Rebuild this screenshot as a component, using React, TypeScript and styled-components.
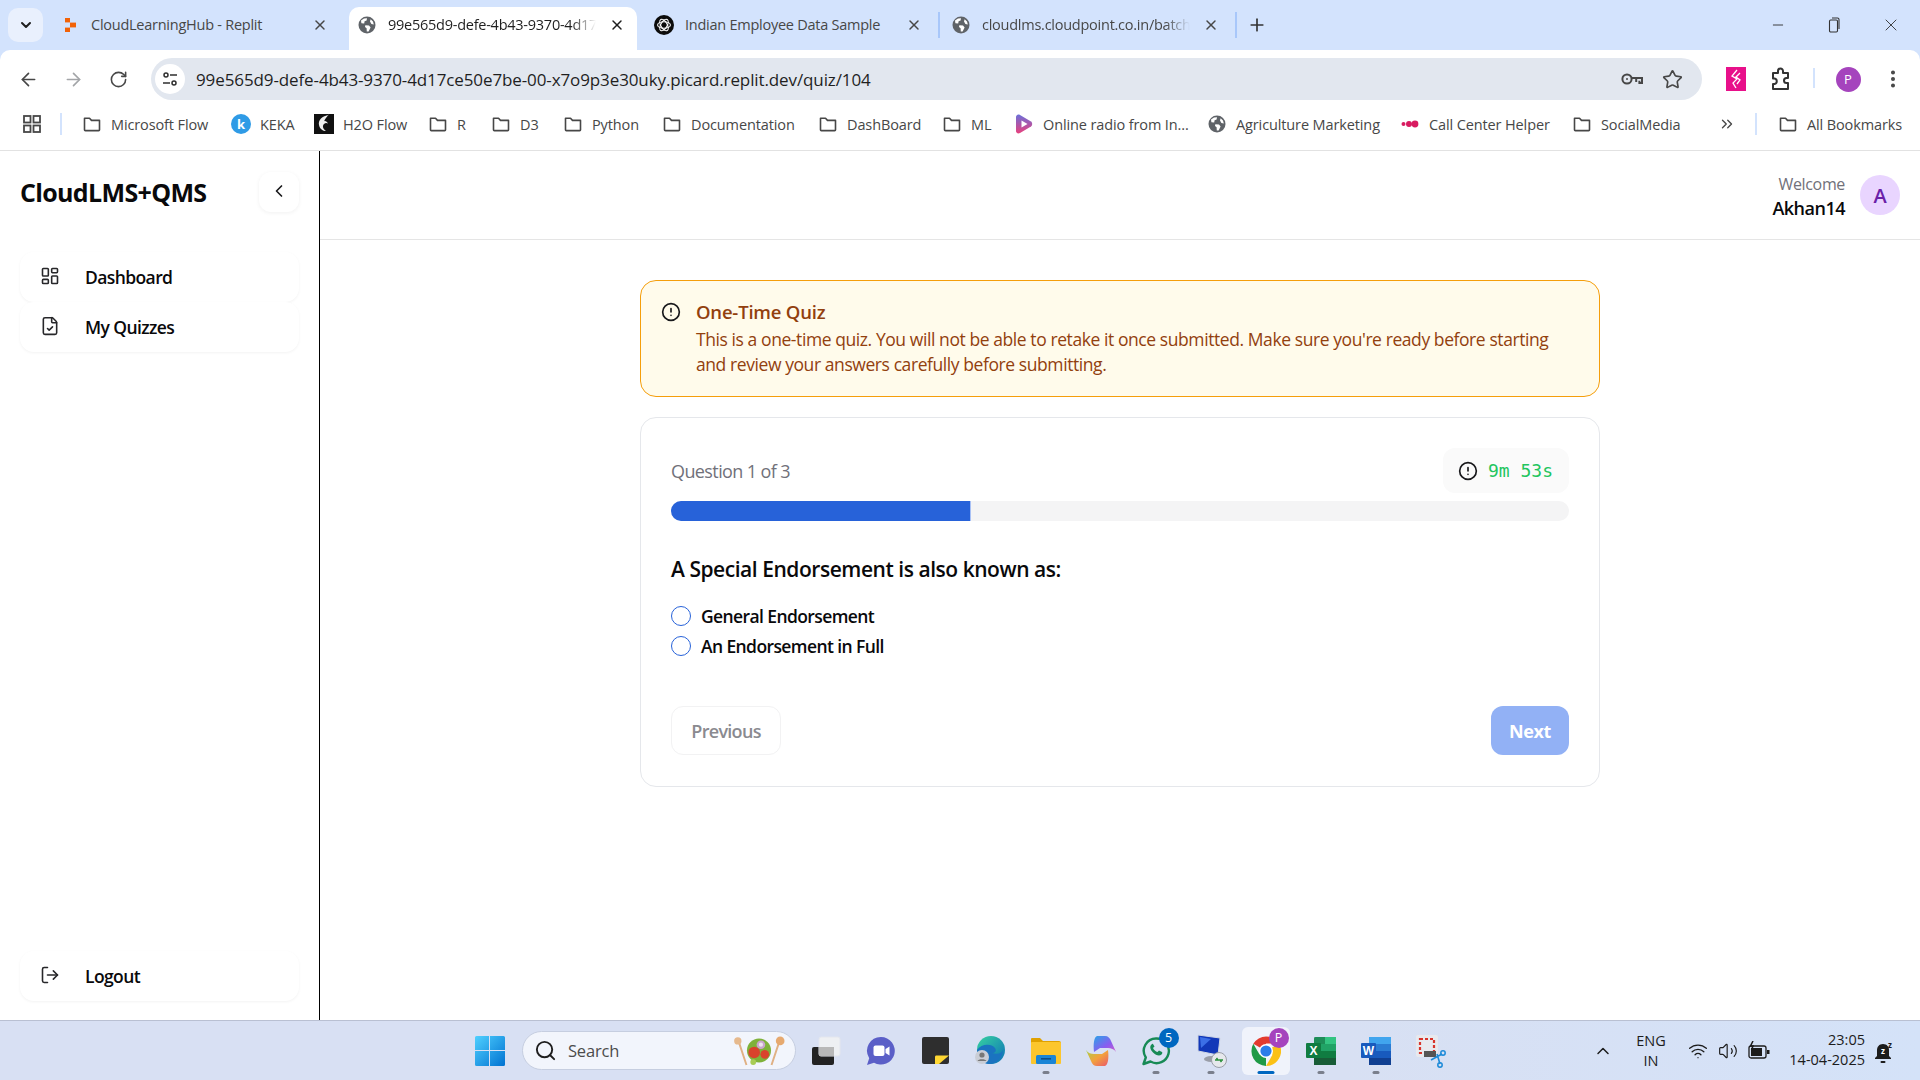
import React from 'react';
import styled, { createGlobalStyle } from 'styled-components';
import {
  ArrowLeft, ArrowRight, RotateCw, Star, EllipsisVertical, X, Plus, Minus, ChevronDown, ChevronUp, ChevronLeft,
  ChevronsRight, LayoutDashboard, FileCheck, LogOut, CircleAlert, Search as SearchGlyph, Wifi, Volume2,
} from 'lucide-react';

const UI = `'Open Sans', 'Noto Sans', 'Liberation Sans', sans-serif`;

const Global = createGlobalStyle`
  html, body { margin: 0; padding: 0; background: #fff; }
  body { font-family: ${UI}; overflow: hidden; }
  * { box-sizing: border-box; }
`;

const Page = styled.div`
  width: 1920px; height: 1080px; display: flex; flex-direction: column; overflow: hidden;
  background: #d3e3fd;
`;

/* ---------- tab strip ---------- */
const TabStrip = styled.div`
  height: 50px; flex: none; display: flex; align-items: flex-end; padding-left: 8px; background: #d3e3fd;
`;
const TabMenu = styled.div`
  width: 35px; height: 34px; margin: 0 9px 8px 0; border-radius: 10px; background: #e9f0fd;
  display: flex; align-items: center; justify-content: center; color: #1f1f1f;
`;
const Tab = styled.div<{ $active?: boolean }>`
  width: 288px; height: ${p => (p.$active ? 43 : 34)}px; margin-bottom: ${p => (p.$active ? 0 : 8)}px;
  display: flex; align-items: center; padding: 0 0 ${p => (p.$active ? 8 : 1)}px 10px;
  background: ${p => (p.$active ? '#fff' : 'transparent')};
  border-radius: 10px 10px 0 0;
  color: ${p => (p.$active ? '#1f1f1f' : '#474747')};
`;
const TabIcon = styled.span`
  width: 16px; height: 20px; flex: none; display: flex; align-items: center; justify-content: center;
  svg { flex: none; }
`;
const TabTitle = styled.span<{ $fade?: boolean }>`
  margin-left: 13px; width: 208px; font-size: 14.5px; letter-spacing: -0.25px; white-space: nowrap; overflow: hidden;
  ${p => p.$fade ? `-webkit-mask-image: linear-gradient(to right, #000 88%, transparent 100%); mask-image: linear-gradient(to right, #000 88%, transparent 100%);` : ''}
`;
const TabClose = styled.span`
  width: 22px; display: flex; justify-content: center; margin-left: 10px;
`;
const TabGap = styled.div`
  width: 9px; height: 26px; margin-bottom: 12px; display: flex; justify-content: center;
`;
const TabLine = styled.div<{ $on?: boolean }>`
  width: 2px; height: 100%; background: ${p => (p.$on ? '#a8c7fa' : 'transparent')};
`;
const NewTab = styled.div`
  width: 24px; height: 24px; margin: 0 0 13px 5px; display: flex; align-items: center; justify-content: center; color: #333;
`;
const WindowButtons = styled.div`
  margin-left: auto; height: 50px; display: flex; align-items: center; color: #333;
`;
const WinBtn = styled.div<{ $w: number }>`
  width: ${p => p.$w}px; display: flex; justify-content: center;
`;

/* ---------- toolbar ---------- */
const Toolbar = styled.div`
  height: 51px; flex: none; background: #fff; border-radius: 10px 10px 0 0; display: flex; align-items: flex-end;
  padding: 0 0 1px 6px;
`;
const NavCell = styled.div<{ $muted?: boolean }>`
  width: 45px; height: 42px; display: flex; align-items: center; justify-content: center;
  color: ${p => (p.$muted ? '#a3a5a8' : '#474747')};
`;
const AddressBar = styled.div`
  width: 1551px; height: 42px; margin-left: 10px; border-radius: 21px; background: #e2e7ef;
  display: flex; align-items: center; padding: 0 4px 0 4px;
`;
const SiteInfo = styled.div`
  width: 30px; height: 30px; border-radius: 50%; background: #fff; flex: none;
  display: flex; align-items: center; justify-content: center;
`;
const UrlText = styled.span`
  margin-left: 11px; font-size: 17px; letter-spacing: -0.11px; color: #1f1f1f; white-space: nowrap;
`;
const AddressIcons = styled.div`
  margin-left: auto; display: flex; align-items: center; gap: 18px; padding-right: 15px; color: #474747;
`;
const ToolCell = styled.div<{ $w: number; $ml?: number }>`
  width: ${p => p.$w}px; margin-left: ${p => p.$ml ?? 0}px; height: 42px;
  display: flex; align-items: center; justify-content: center; color: #474747;
`;
const ToolSep = styled.div`
  width: 2px; height: 20px; margin: 0 10px 12px 10px; background: #d3e3fd;
`;
const ProfileDot = styled.div`
  width: 25px; height: 25px; border-radius: 50%; background: #a544bd; color: #fff; font-size: 13px;
  display: flex; align-items: center; justify-content: center;
`;

/* ---------- bookmarks ---------- */
const BookmarkBar = styled.div`
  height: 50px; flex: none; background: #fff; border-bottom: 1px solid #e2e2e2; display: flex; align-items: center;
  padding: 0 18px 3px 20px;
`;
const AppsCell = styled.div`
  width: 24px; display: flex; justify-content: center; color: #474747;
`;
const BarSep = styled.div<{ $ml: number; $mr: number }>`
  width: 2px; height: 22px; background: #d3e3fd; margin: 0 ${p => p.$mr}px 0 ${p => p.$ml}px;
`;
const Bookmark = styled.div<{ $w?: number }>`
  ${p => (p.$w ? `width: ${p.$w}px;` : '')} display: flex; align-items: center; gap: 10px; flex: none;
  font-size: 14.5px; letter-spacing: -0.12px; color: #474747; white-space: nowrap;
`;
const BookmarkIcon = styled.span`
  width: 18px; height: 20px; flex: none; display: flex; align-items: center; justify-content: center;
  svg { flex: none; }
`;
const BookmarkEnd = styled.div`
  margin-left: auto; display: flex; align-items: center; color: #474747;
`;

/* ---------- body ---------- */
const Body = styled.div`
  flex: 1; min-height: 0; display: flex; background: #fff;
`;
const Sidebar = styled.aside`
  width: 320px; flex: none; border-right: 1px solid #000; display: flex; flex-direction: column;
  padding: 21px 20px 19px 20px;
`;
const SideTop = styled.div`
  display: flex; align-items: center; justify-content: space-between; height: 40px; margin-bottom: 40px;
`;
const Logo = styled.div`
  font-size: 25px; font-weight: 700; letter-spacing: -0.65px; color: #09090b; white-space: nowrap;
`;
const CollapseBtn = styled.div`
  width: 40px; height: 40px; border-radius: 12px; background: #fff; color: #18181b; padding-bottom: 2px;
  box-shadow: 0 1px 4px rgba(0,0,0,.06); display: flex; align-items: center; justify-content: center;
`;
const NavItem = styled.div`
  width: 279px; height: 50px; border-radius: 14px; background: #fff; box-shadow: 0 1px 3px rgba(0,0,0,.05);
  display: flex; align-items: center; padding-left: 20px; font-size: 17.5px; font-weight: 600; letter-spacing: -0.6px;
  color: #09090b; gap: 25px;
  svg { color: #27272a; flex: none; margin-top: -2px; }
`;
const NavSpacer = styled.div` flex: 1; `;
const Main = styled.main` flex: 1; min-width: 0; display: flex; flex-direction: column; `;
const Header = styled.header`
  height: 89px; flex: none; border-bottom: 1px solid #e5e5e5; display: flex; align-items: center; justify-content: flex-end;
  padding: 0 20px 0 0; gap: 15px;
`;
const UserText = styled.div` text-align: right; padding-top: 2px; `;
const Welcome = styled.div` font-size: 16px; line-height: 24px; color: #71717a; letter-spacing: -0.35px; `;
const UserName = styled.div` font-size: 18px; line-height: 24px; font-weight: 600; color: #09090b; letter-spacing: -0.5px; `;
const Avatar = styled.div`
  width: 40px; height: 40px; border-radius: 50%; background: #e9d5ff; color: #6b21a8; font-size: 20px; font-weight: 600;
  display: flex; align-items: center; justify-content: center;
`;
const Content = styled.div`
  width: 960px; margin: 40px auto 0; display: flex; flex-direction: column; gap: 20px;
`;
const Alert = styled.section`
  height: 117px; border: 1px solid #f59e0b; border-radius: 16px; background: #fffbeb; padding: 18px 24px 0 20px;
  display: flex; gap: 15px;
  svg { flex: none; color: #18181b; margin-top: 3px; }
`;
const AlertTitle = styled.div`
  font-size: 18.5px; line-height: 25px; font-weight: 600; color: #92400e; letter-spacing: -0.2px;
`;
const AlertText = styled.div`
  font-size: 17.5px; line-height: 25px; color: #92400e; letter-spacing: -0.42px; margin-top: 3px;
`;
const Card = styled.section`
  height: 370px; border: 1px solid #e5e7eb; border-radius: 16px; background: #fff; padding: 30px;
  display: flex; flex-direction: column;
`;
const CardTop = styled.div` display: flex; align-items: center; justify-content: space-between; `;
const QuestionCount = styled.div` font-size: 18px; color: #71717a; letter-spacing: -0.6px; `;
const Timer = styled.div`
  height: 45px; width: 126px; border-radius: 12px; background: #fafafa; display: flex; align-items: center; gap: 10px;
  padding-left: 15px; svg { color: #18181b; flex: none; }
`;
const TimerText = styled.span`
  font-family: 'DejaVu Sans Mono', 'Liberation Mono', monospace; font-size: 18px; color: #22c55e; white-space: nowrap;
`;
const Track = styled.div`
  height: 20px; margin-top: 8px; border-radius: 10px; background: #f4f4f5; overflow: hidden;
`;
const Fill = styled.div`
  height: 100%; background: #2762d9; border-right: 1px solid #a9c1f5;
`;
const QuestionTitle = styled.h2`
  margin: 32px 0 0; font-size: 21px; line-height: 32px; font-weight: 600; color: #09090b; letter-spacing: -0.46px;
`;
const Options = styled.div` margin-top: 16px; display: flex; flex-direction: column; `;
const Option = styled.label`
  height: 30px; display: flex; align-items: center; gap: 10px; font-size: 17.5px; font-weight: 600; color: #09090b; letter-spacing: -0.6px;
`;
const Radio = styled.input`
  appearance: none; margin: 0; width: 20px; height: 20px; border-radius: 50%; border: 1.5px solid #2762d9; background: #fff; flex: none;
`;
const Actions = styled.div` margin: auto 0 1px; display: flex; justify-content: space-between; `;
const PrevBtn = styled.button`
  width: 110px; height: 49px; border: 1px solid #f2f2f3; border-radius: 12px; background: #fff;
  font-family: ${UI}; font-size: 18px; font-weight: 600; color: #8a8a90; letter-spacing: -0.7px;
`;
const NextBtn = styled.button`
  width: 78px; height: 49px; border: 0; border-radius: 12px; background: #92b1f5;
  font-family: ${UI}; font-size: 18px; font-weight: 700; color: #fff; letter-spacing: -0.4px;
`;

/* ---------- taskbar ---------- */
const Taskbar = styled.footer`
  height: 60px; flex: none; border-top: 1px solid #b9c0d2;
  background: linear-gradient(to right, #d8e0f3 0%, #d8e0f3 70%, #d4e2f8 100%);
  display: flex; align-items: center; padding-left: 465px; position: relative;
`;
const StartCell = styled.div` width: 50px; display: flex; justify-content: center; flex: none; `;
const SearchPill = styled.div`
  width: 274px; height: 39px; margin: 0 2px 0 7px; border-radius: 20px; background: #f2f5fc; border: 1px solid #c6cee0;
  display: flex; align-items: center; padding-left: 11px; color: #1f1f1f; flex: none;
`;
const SearchLabel = styled.span` margin-left: 11px; font-size: 16.5px; color: #4c4c4c; letter-spacing: -0.2px; `;
const SaladBox = styled.div` margin-left: auto; margin-right: 10px; display: flex; `;
const TaskCell = styled.div<{ $active?: boolean }>`
  width: 48px; height: 48px; margin: 0 3.5px; flex: none; border-radius: 6px; position: relative;
  display: flex; align-items: center; justify-content: center;
  background: ${p => (p.$active ? '#f0f3fb' : 'transparent')};
`;
const Pip = styled.span<{ $active?: boolean }>`
  position: absolute; bottom: 1px; left: 50%; transform: translateX(-50%);
  width: ${p => (p.$active ? 17 : 7)}px; height: 3px; border-radius: 2px; background: ${p => (p.$active ? '#0067c0' : '#7a7f8c')};
`;
const Badge = styled.span<{ $bg: string }>`
  position: absolute; top: 1px; right: 1px; width: 20px; height: 20px; border-radius: 50%; background: ${p => p.$bg}; color: #fff;
  font-size: 12.5px; display: flex; align-items: center; justify-content: center;
`;
const Tray = styled.div`
  margin-left: auto; display: flex; align-items: center; color: #1c1c1c;
`;
const TrayChevron = styled.div` width: 40px; display: flex; justify-content: center; `;
const Lang = styled.div` width: 50px; margin-left: 3px; text-align: center; font-size: 14.5px; line-height: 20px; `;
const TrayIcons = styled.div` margin-left: 12px; display: flex; align-items: center; gap: 10px; `;
const Clock = styled.div` width: 90px; margin-left: 5px; padding-bottom: 2px; text-align: right; font-size: 14.5px; line-height: 20px; white-space: nowrap; `;
const BellCell = styled.div` width: 34px; margin-left: 4px; margin-right: 17px; display: flex; justify-content: center; `;

/* ---------- drawn icons ---------- */
const Globe = ({ s = 18 }: { s?: number }) => (
  <svg width={s} height={s} viewBox="0 0 18 18">
    <circle cx="9" cy="9" r="8.5" fill="#5f6368" />
    <path d="M3 4.5 6 2.5 9 2.2 8.6 4.4 6.6 5.2 6.2 7.5 3.4 7.2ZM7.3 9.2 11 9.6 12.6 11.6 10.6 15.6 8.8 15.6 8.6 12.2 7 11ZM12.6 3.2 15 5.6 15.8 8.6 13.4 8 12 5.6Z" fill="#fff" />
  </svg>
);
const Folder = () => (
  <svg width="18" height="18" viewBox="0 0 18 18" fill="none" stroke="#474747" strokeWidth="1.6">
    <path d="M1.5 3.2h5l2 2.2h8v9.4a.8.8 0 0 1-.8.8H2.3a.8.8 0 0 1-.8-.8Z" strokeLinejoin="round" />
  </svg>
);
const ReplitIcon = () => (
  <svg width="16" height="16" viewBox="0 0 16 16" fill="#f26207">
    <rect x="3" y="1" width="5" height="4.4" />
    <rect x="8" y="5.6" width="6" height="4.8" />
    <rect x="3" y="10.6" width="5" height="4.4" />
  </svg>
);
const OpenAiIcon = () => (
  <svg width="20" height="20" viewBox="0 0 20 20">
    <circle cx="10" cy="10" r="10" fill="#0b0b0b" />
    <g fill="none" stroke="#fff" strokeWidth="1.1">
      <ellipse cx="10" cy="10" rx="6.4" ry="3.2" />
      <ellipse cx="10" cy="10" rx="6.4" ry="3.2" transform="rotate(60 10 10)" />
      <ellipse cx="10" cy="10" rx="6.4" ry="3.2" transform="rotate(120 10 10)" />
    </g>
  </svg>
);
const RestoreIcon = () => (
  <svg width="14" height="16" viewBox="0 0 14 16" fill="none" stroke="#333" strokeWidth="1.1">
    <rect x="2.5" y="3" width="8" height="12" rx="1.2" />
    <path d="M5 1h5.5A1.5 1.5 0 0 1 12 2.5V12" />
  </svg>
);
const SiteTune = () => (
  <svg width="18" height="18" viewBox="0 0 18 18" fill="none" stroke="#2f2f2f" strokeWidth="1.5">
    <circle cx="5" cy="5" r="2" />
    <path d="M9 5h7M2 13h7" />
    <circle cx="13" cy="13" r="2" />
  </svg>
);
const KeyIcon = () => (
  <svg width="24" height="20" viewBox="0 0 24 20" fill="none" stroke="#474747" strokeWidth="2">
    <circle cx="7" cy="10" r="4.6" />
    <path d="M11.6 9H22v5h-2.6v-2.2M16.2 9.5V13" />
    <circle cx="7" cy="10" r="1" fill="#474747" stroke="none" />
  </svg>
);
const PinkExt = () => (
  <svg width="20" height="24" viewBox="0 0 20 24">
    <rect width="20" height="24" fill="#e8108a" />
    <path d="M11 3 6 9l5 3-4 4 3 5M14 6l-4 4 4 3-3 4" fill="none" stroke="#fff" strokeWidth="1.3" />
  </svg>
);
const PuzzleIcon = () => (
  <svg width="22" height="24" viewBox="0 0 22 24" fill="none" stroke="#333" strokeWidth="2" strokeLinejoin="round">
    <path d="M3 6h5V4a2.5 2.5 0 0 1 5 0v2h5v5h-1.5a2.4 2.4 0 0 0 0 5H18v6H3v-5h1.5a2.8 2.8 0 0 0 0-5.500H3Z" />
  </svg>
);
const AppsIcon = () => (
  <svg width="20" height="20" viewBox="0 0 20 20" fill="none" stroke="#474747" strokeWidth="1.8">
    <rect x="2" y="2" width="6.500" height="6.500" />
    <rect x="11.500" y="2" width="6.500" height="6.500" />
    <rect x="2" y="11.500" width="6.500" height="6.500" />
    <rect x="11.500" y="11.500" width="6.500" height="6.500" />
  </svg>
);
const KekaIcon = () => (
  <svg width="20" height="20" viewBox="0 0 20 20">
    <circle cx="10" cy="10" r="10" fill="#2f9be6" />
    <text x="10" y="14.500" textAnchor="middle" fontSize="13" fontWeight="700" fontFamily="Open Sans" fill="#fff">k</text>
  </svg>
);
const H2oIcon = () => (
  <svg width="20" height="20" viewBox="0 0 20 20">
    <rect width="20" height="20" fill="#111" />
    <path d="M15 1C8 2 4 6 5 11c.8 4 4 6 7 6-3-2-4-5-2-7 1.500-1.500 3-1 4-.500-1-2-3-3-4-2 1-3 3-5 5-7Z" fill="#eee" />
  </svg>
);
const RadioIcon = () => (
  <svg width="20" height="20" viewBox="0 0 20 20">
    <defs><linearGradient id="rg" x1="0" y1="0" x2="0" y2="1"><stop offset="0" stopColor="#6c6fd8" /><stop offset="1" stopColor="#e8417d" /></linearGradient></defs>
    <path d="M2 3C2 1 4 0 6 1l11 6.500c1.600 1 1.600 4 0 5L6 19c-2 1-4 0-4-2Z" fill="url(#rg)" />
    <path d="M7.500 6.500v7l6-3.500Z" fill="#fff" />
  </svg>
);
const CallIcon = () => (
  <svg width="18" height="18" viewBox="0 0 18 18" fill="#d81b60">
    <circle cx="2.500" cy="9" r="2" /><circle cx="8" cy="9" r="3" /><circle cx="14" cy="9" r="3.400" />
  </svg>
);
const WinLogo = () => (
  <svg width="30" height="30" viewBox="0 0 30 30">
    <defs><linearGradient id="wl" x1="0" y1="0" x2="1" y2="1"><stop offset="0" stopColor="#4fd0ff" /><stop offset="1" stopColor="#0072d1" /></linearGradient></defs>
    <path d="M0 1.500A1.500 1.500 0 0 1 1.500 0H14v14H0ZM15 0h13.500A1.500 1.500 0 0 1 30 1.500V14H15ZM0 15h14v15H1.500A1.500 1.500 0 0 1 0 28.500ZM15 15h15v13.500a1.500 1.500 0 0 1-1.500 1.500H15Z" fill="url(#wl)" />
  </svg>
);
const Salad = () => (
  <svg width="52" height="30" viewBox="0 0 54 31">
    <path d="M6 6 14 30M48 6l-8 24" stroke="#e0b184" strokeWidth="2" />
    <circle cx="5" cy="5" r="3.800" fill="#e6b98d" /><circle cx="49" cy="5" r="4.500" fill="#e6a96f" />
    <circle cx="27" cy="15" r="12.500" fill="#7fb23a" />
    <circle cx="22" cy="17" r="6" fill="#d9432c" /><circle cx="33" cy="19" r="4.500" fill="#d9432c" />
    <circle cx="29" cy="9" r="4.500" fill="#c9a6cc" /><circle cx="29" cy="9" r="2.200" fill="#efe3f0" />
    <circle cx="21" cy="27" r="3" fill="#a8cc55" />
  </svg>
);
const TaskView = () => (
  <svg width="30" height="30" viewBox="0 0 30 30">
    <rect x="1" y="11" width="22" height="18" rx="2" fill="#222" />
    <rect x="8" y="1" width="21" height="19" rx="2" fill="#f2f2f2" fillOpacity=".85" stroke="#e3e6ee" />
    <rect x="8" y="11" width="15" height="9" fill="#b8b8b8" />
  </svg>
);
const MeetIcon = () => (
  <svg width="30" height="30" viewBox="0 0 30 30">
    <path d="M15 1a13.800 13.800 0 1 1-7 25.700L1 29l2.200-6.800A13.800 13.800 0 0 1 15 1Z" fill="#5b5fc7" />
    <rect x="7.500" y="9.500" width="11" height="10.500" rx="2" fill="#fff" />
    <path d="M19.500 13l4-2.500v9l-4-2.500Z" fill="#fff" />
  </svg>
);
const StickyIcon = () => (
  <svg width="27" height="27" viewBox="0 0 27 27">
    <rect width="27" height="27" rx="2" fill="#2e2e2e" />
    <path d="M13 27V20c0-1 .6-1.500 1.500-1.500H27L17 27Z" fill="#ffd733" />
  </svg>
);
const EdgeIcon = () => (
  <svg width="32" height="32" viewBox="0 0 32 32">
    <defs><linearGradient id="eg" x1="0" y1="0" x2="1" y2="1"><stop offset="0" stopColor="#37d3a0" /><stop offset="1" stopColor="#0c6fb8" /></linearGradient></defs>
    <circle cx="16" cy="15" r="14" fill="url(#eg)" />
    <path d="M2 15c4-6 14-7 18-2 2 3 0 5-3 5 6 2 10 0 11-3 0 6-5 14-14 14C8 29 2 23 2 15Z" fill="#1a73c0" />
    <circle cx="7" cy="22" r="7" fill="#c9cdd6" /><circle cx="7" cy="20" r="2.600" fill="#777" /><path d="M2.500 26c.8-2.500 8-2.500 9 0Z" fill="#777" />
  </svg>
);
const FilesIcon = () => (
  <svg width="32" height="28" viewBox="0 0 32 28">
    <path d="M1 2a1 1 0 0 1 1-1h8l3 3h16a2 2 0 0 1 2 2v3H1Z" fill="#e0a100" />
    <rect x="1" y="5" width="30" height="22" rx="1" fill="#fcc62d" />
    <rect x="6" y="18" width="20" height="9" rx="1.500" fill="#1a85d6" />
    <rect x="11" y="21" width="10" height="1.600" fill="#0b4e8a" />
  </svg>
);
const CopilotIcon = () => (
  <svg width="32" height="32" viewBox="0 0 32 32">
    <defs>
      <linearGradient id="c1" x1="0" y1="0" x2="1" y2="1"><stop offset="0" stopColor="#2aa4e8" /><stop offset=".6" stopColor="#8a5cf0" /><stop offset="1" stopColor="#d05ac8" /></linearGradient>
      <linearGradient id="c2" x1="0" y1="0" x2="1" y2="1"><stop offset="0" stopColor="#a7d247" /><stop offset=".5" stopColor="#f2a23c" /><stop offset="1" stopColor="#ea5a6a" /></linearGradient>
    </defs>
    <path d="M12 1h8c3 0 5 2 6 5l5 11c-2-3-5-4-8-4h-8L9 17C8 9 9 2 12 1Z" fill="url(#c1)" />
    <path d="M20 31h-8c-3 0-5-2-6-5L1 15c2 3 5 4 8 4h8l6-4c1 8 0 15-3 16Z" fill="url(#c2)" />
  </svg>
);
const WhatsAppIcon = () => (
  <svg width="30" height="30" viewBox="0 0 30 30">
    <path d="M15.500 2.500a12.300 12.300 0 1 1-6 23L2.500 28l2.300-6.500a12.300 12.300 0 0 1 10.700-19Z" fill="none" stroke="#178a55" strokeWidth="2.400" strokeLinejoin="round" />
    <path d="M10.500 8.500c-2 1.500-1.500 5 1.500 8s6.500 4 8.500 2c1-1 1-2 .5-2.500l-3-1.500-1.500 1.500c-2-.5-3.500-2-4.500-4l1.500-1.500L12 8c-.4-.4-1-.2-1.500.5Z" fill="#178a55" />
  </svg>
);
const RdpIcon = () => (
  <svg width="32" height="34" viewBox="0 0 32 34">
    <path d="M3 1l22 3-2 17L3 17Z" fill="#1238b8" stroke="#cfd6e4" />
    <path d="M5 3 16 5 6 14Z" fill="#3c6fe6" />
    <ellipse cx="16" cy="25" rx="7" ry="3" fill="#9a9ea8" />
    <circle cx="24" cy="26" r="7.500" fill="#e6e8ec" stroke="#9a9ea8" />
    <path d="M20 26h3l-1.500-2M28 26h-3l1.500 2" fill="none" stroke="#2a8f3a" strokeWidth="1.500" />
  </svg>
);
const ChromeIcon = () => (
  <svg width="30" height="30" viewBox="0 0 30 30">
    <path d="M15 15 2.300 7.800A15 15 0 0 1 28 7.500H15Z" fill="#e33b2e" />
    <path d="M15 15 28 7.500A15 15 0 0 1 15 30l6.500-11.200Z" fill="#fbc116" />
    <path d="M15 15 15 30A15 15 0 0 1 2.300 7.800l6.200 10.800Z" fill="#1f9a46" />
    <circle cx="15" cy="15" r="7" fill="#fff" /><circle cx="15" cy="15" r="5.600" fill="#2b7de9" />
  </svg>
);
const ExcelIcon = () => (
  <svg width="30" height="28" viewBox="0 0 30 28">
    <rect x="8" y="0" width="22" height="28" rx="1.500" fill="#21a366" />
    <rect x="8" y="0" width="11" height="7" fill="#185c37" fillOpacity=".3" /><rect x="19" y="0" width="11" height="7" fill="#33c481" />
    <rect x="8" y="14" width="22" height="7" fill="#107c41" /><rect x="8" y="21" width="22" height="7" fill="#185c37" />
    <rect x="0" y="6" width="15" height="15" rx="1" fill="#107c41" />
    <text x="7.500" y="18" textAnchor="middle" fontSize="12" fontWeight="700" fontFamily="Liberation Sans" fill="#fff">X</text>
  </svg>
);
const WordIcon = () => (
  <svg width="30" height="28" viewBox="0 0 30 28">
    <rect x="8" y="0" width="22" height="7" fill="#41a5ee" /><rect x="8" y="7" width="22" height="7" fill="#2b7cd3" />
    <rect x="8" y="14" width="22" height="7" fill="#185abd" /><rect x="8" y="21" width="22" height="7" fill="#103f91" />
    <rect x="0" y="6" width="15" height="15" rx="1" fill="#185abd" />
    <text x="7.500" y="18" textAnchor="middle" fontSize="12" fontWeight="700" fontFamily="Liberation Sans" fill="#fff">W</text>
  </svg>
);
const SnipIcon = () => (
  <svg width="32" height="34" viewBox="0 0 32 34">
    <rect x="1" y="1" width="22" height="22" rx="2" fill="#e8e9ee" />
    <rect x="5" y="5" width="14" height="14" fill="none" stroke="#d8342b" strokeWidth="2.200" strokeDasharray="3 2" />
    <rect x="9" y="17" width="12" height="6" fill="#555" />
    <path d="M16 26 27 20M22 20l3 10" stroke="#1c8ad8" strokeWidth="1.600" />
    <circle cx="28" cy="19" r="2.200" fill="none" stroke="#1c8ad8" strokeWidth="1.500" /><circle cx="25" cy="31" r="2.200" fill="none" stroke="#1c8ad8" strokeWidth="1.500" />
  </svg>
);
const BatteryIcon = () => (
  <svg width="22" height="20" viewBox="0 0 22 20" fill="none" stroke="#1c1c1c" strokeWidth="1.300">
    <rect x="1" y="5" width="17" height="12" rx="2" />
    <rect x="3" y="7" width="11" height="8" fill="#1c1c1c" stroke="none" />
    <rect x="19" y="9" width="2.500" height="4" fill="#1c1c1c" stroke="none" />
    <path d="M5 0 2.500 5H5L3.500 9" strokeWidth="1.500" />
  </svg>
);
const BellIcon = () => (
  <svg width="24" height="32" viewBox="0 -6 24 32">
    <path d="M9 3c-4 0-6 3-6 6v6l-2 2v1h16v-1l-2-2V9c0-3-2-6-6-6Z" fill="#1c1c1c" />
    <rect x="6.500" y="20" width="5" height="2" rx="1" fill="#1c1c1c" />
    <text x="9" y="13" textAnchor="middle" fontSize="8" fontWeight="700" fontFamily="Open Sans" fill="#fff">z</text>
    <text x="16" y="7" textAnchor="middle" fontSize="8" fontWeight="700" fontFamily="Open Sans" fill="#1c1c1c">z</text>
  </svg>
);

const bookmarks: { label: string; w: number; icon: React.ReactNode }[] = [
  { label: 'Microsoft Flow', w: 149, icon: <Folder /> },
  { label: 'KEKA', w: 83, icon: <KekaIcon /> },
  { label: 'H2O Flow', w: 114, icon: <H2oIcon /> },
  { label: 'R', w: 63, icon: <Folder /> },
  { label: 'D3', w: 72, icon: <Folder /> },
  { label: 'Python', w: 99, icon: <Folder /> },
  { label: 'Documentation', w: 156, icon: <Folder /> },
  { label: 'DashBoard', w: 124, icon: <Folder /> },
  { label: 'ML', w: 72, icon: <Folder /> },
  { label: 'Online radio from In...', w: 193, icon: <RadioIcon /> },
  { label: 'Agriculture Marketing', w: 193, icon: <Globe s={18} /> },
  { label: 'Call Center Helper', w: 172, icon: <CallIcon /> },
  { label: 'SocialMedia', w: 120, icon: <Folder /> },
];

const tabs = [
  { title: 'CloudLearningHub - Replit', icon: <ReplitIcon />, line: false },
  { title: '99e565d9-defe-4b43-9370-4d17ce50e7be', icon: <Globe />, active: true, fade: true, line: false },
  { title: 'Indian Employee Data Sample', icon: <OpenAiIcon />, line: true },
  { title: 'cloudlms.cloudpoint.co.in/batch/12', icon: <Globe />, fade: true, line: true },
];

const progress = (1 / 3) * 100;

export default function App() {
  return (
    <Page>
      <Global />
      <TabStrip>
        <TabMenu><ChevronDown size={16} strokeWidth={3} /></TabMenu>
        {tabs.map(t => (
          <React.Fragment key={t.title}>
            <Tab $active={t.active}>
              <TabIcon>{t.icon}</TabIcon>
              <TabTitle $fade={t.fade}>{t.title}</TabTitle>
              <TabClose><X size={16} strokeWidth={2.2} /></TabClose>
            </Tab>
            <TabGap><TabLine $on={t.line} /></TabGap>
          </React.Fragment>
        ))}
        <NewTab><Plus size={20} strokeWidth={2} /></NewTab>
        <WindowButtons>
          <WinBtn $w={55}><Minus size={16} strokeWidth={1.4} /></WinBtn>
          <WinBtn $w={57}><RestoreIcon /></WinBtn>
          <WinBtn $w={58}><X size={20} strokeWidth={1.1} /></WinBtn>
        </WindowButtons>
      </TabStrip>

      <Toolbar>
        <NavCell><ArrowLeft size={21} strokeWidth={1.9} /></NavCell>
        <NavCell $muted><ArrowRight size={21} strokeWidth={1.9} /></NavCell>
        <NavCell><RotateCw size={19} strokeWidth={2} /></NavCell>
        <AddressBar>
          <SiteInfo><SiteTune /></SiteInfo>
          <UrlText>99e565d9-defe-4b43-9370-4d17ce50e7be-00-x7o9p3e30uky.picard.replit.dev/quiz/104</UrlText>
          <AddressIcons>
            <KeyIcon />
            <Star size={21} strokeWidth={1.9} />
          </AddressIcons>
        </AddressBar>
        <ToolCell $w={45} $ml={11}><PinkExt /></ToolCell>
        <ToolCell $w={45}><PuzzleIcon /></ToolCell>
        <ToolSep />
        <ToolCell $w={46}><ProfileDot>P</ProfileDot></ToolCell>
        <ToolCell $w={44}><EllipsisVertical size={22} strokeWidth={2.4} /></ToolCell>
      </Toolbar>

      <BookmarkBar>
        <AppsCell><AppsIcon /></AppsCell>
        <BarSep $ml={16} $mr={21} />
        {bookmarks.map(b => (
          <Bookmark key={b.label} $w={b.w}><BookmarkIcon>{b.icon}</BookmarkIcon><span>{b.label}</span></Bookmark>
        ))}
        <BookmarkEnd>
          <ChevronsRight size={18} strokeWidth={1.8} />
          <BarSep $ml={19} $mr={22} />
          <Bookmark><BookmarkIcon><Folder /></BookmarkIcon><span>All Bookmarks</span></Bookmark>
        </BookmarkEnd>
      </BookmarkBar>

      <Body>
        <Sidebar>
          <SideTop>
            <Logo>CloudLMS+QMS</Logo>
            <CollapseBtn><ChevronLeft size={20} strokeWidth={2} /></CollapseBtn>
          </SideTop>
          <NavItem><LayoutDashboard size={20} strokeWidth={1.9} />Dashboard</NavItem>
          <NavItem><FileCheck size={20} strokeWidth={1.9} />My Quizzes</NavItem>
          <NavSpacer />
          <NavItem><LogOut size={20} strokeWidth={1.9} />Logout</NavItem>
        </Sidebar>
        <Main>
          <Header>
            <UserText>
              <Welcome>Welcome</Welcome>
              <UserName>Akhan14</UserName>
            </UserText>
            <Avatar>A</Avatar>
          </Header>
          <Content>
            <Alert>
              <CircleAlert size={20} strokeWidth={2} />
              <div>
                <AlertTitle>One-Time Quiz</AlertTitle>
                <AlertText>
                  This is a one-time quiz. You will not be able to retake it once submitted. Make sure you're ready before starting and review your answers carefully before submitting.
                </AlertText>
              </div>
            </Alert>
            <Card>
              <CardTop>
                <QuestionCount>Question 1 of 3</QuestionCount>
                <Timer><CircleAlert size={20} strokeWidth={2} /><TimerText>9m 53s</TimerText></Timer>
              </CardTop>
              <Track><Fill style={{ width: `calc(${progress}% + 1px)` }} /></Track>
              <QuestionTitle>A Special Endorsement is also known as:</QuestionTitle>
              <Options>
                <Option><Radio type="radio" name="q" />General Endorsement</Option>
                <Option><Radio type="radio" name="q" />An Endorsement in Full</Option>
              </Options>
              <Actions>
                <PrevBtn>Previous</PrevBtn>
                <NextBtn>Next</NextBtn>
              </Actions>
            </Card>
          </Content>
        </Main>
      </Body>

      <Taskbar>
        <StartCell><WinLogo /></StartCell>
        <SearchPill>
          <SearchGlyph size={23} strokeWidth={2} />
          <SearchLabel>Search</SearchLabel>
          <SaladBox><Salad /></SaladBox>
        </SearchPill>
        <TaskCell><TaskView /></TaskCell>
        <TaskCell><MeetIcon /></TaskCell>
        <TaskCell><StickyIcon /></TaskCell>
        <TaskCell><EdgeIcon /></TaskCell>
        <TaskCell><FilesIcon /><Pip /></TaskCell>
        <TaskCell><CopilotIcon /></TaskCell>
        <TaskCell><WhatsAppIcon /><Badge $bg="#0067c0">5</Badge><Pip /></TaskCell>
        <TaskCell><RdpIcon /><Pip /></TaskCell>
        <TaskCell $active><ChromeIcon /><Badge $bg="#a544bd">P</Badge><Pip $active /></TaskCell>
        <TaskCell><ExcelIcon /><Pip /></TaskCell>
        <TaskCell><WordIcon /><Pip /></TaskCell>
        <TaskCell><SnipIcon /></TaskCell>
        <Tray>
          <TrayChevron><ChevronUp size={20} strokeWidth={1.8} /></TrayChevron>
          <Lang>ENG<br />IN</Lang>
          <TrayIcons>
            <Wifi size={20} strokeWidth={1.6} />
            <Volume2 size={20} strokeWidth={1.4} />
            <BatteryIcon />
          </TrayIcons>
          <Clock>23:05<br />14-04-2025</Clock>
          <BellCell><BellIcon /></BellCell>
        </Tray>
      </Taskbar>
    </Page>
  );
}
